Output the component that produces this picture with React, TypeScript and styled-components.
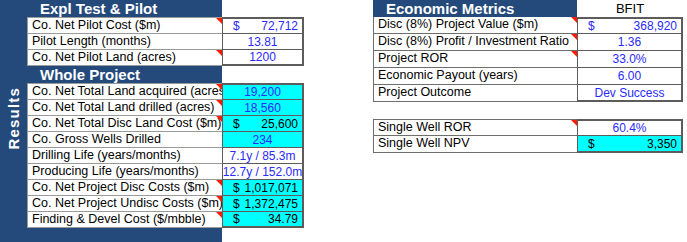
import React from 'react';
import styled, { createGlobalStyle } from 'styled-components';

type Tone = 'blue' | 'black';

interface MetricRow {
  label: string;
  note?: boolean;
  value: string;
  dollar?: boolean;
  fill?: boolean;
  tone?: Tone;
}

const BLUE = '#244a7c';
const CYAN = '#00ffff';
const INK_BLUE = '#2a2aff';
const EDGE = '#5c5c5c';

const pilotRows: MetricRow[] = [
  { label: 'Co. Net Pilot Cost ($m)', note: true, value: '72,712', dollar: true },
  { label: 'Pilot Length (months)', value: '13.81' },
  { label: 'Co. Net Pilot Land (acres)', note: true, value: '1200' },
];

const projectRows: MetricRow[] = [
  { label: 'Co. Net Total Land acquired (acres)', note: true, value: '19,200', fill: true },
  { label: 'Co. Net Total Land drilled (acres)', note: true, value: '18,560', fill: true },
  { label: 'Co. Net Total Disc Land Cost ($m)', note: true, value: '25,600', dollar: true, fill: true, tone: 'black' },
  { label: 'Co. Gross Wells Drilled', value: '234', fill: true },
  { label: 'Drilling Life (years/months)', value: '7.1y / 85.3m' },
  { label: 'Producing Life (years/months)', value: '12.7y / 152.0m' },
  { label: 'Co. Net Project Disc Costs ($m)', note: true, value: '1,017,071', dollar: true, fill: true, tone: 'black' },
  { label: 'Co. Net Project Undisc Costs ($m)', note: true, value: '1,372,475', dollar: true, fill: true, tone: 'black' },
  { label: 'Finding & Devel Cost ($/mbble)', note: true, value: '34.79', dollar: true, fill: true, tone: 'black' },
];

const economicRows: MetricRow[] = [
  { label: 'Disc (8%) Project Value ($m)', note: true, value: '368,920', dollar: true },
  { label: 'Disc (8%) Profit / Investment Ratio', note: true, value: '1.36' },
  { label: 'Project ROR', note: true, value: '33.0%' },
  { label: 'Economic Payout (years)', value: '6.00' },
  { label: 'Project Outcome', value: 'Dev Success' },
];

const wellRows: MetricRow[] = [
  { label: 'Single Well ROR', note: true, value: '60.4%' },
  { label: 'Single Well NPV', value: '3,350', dollar: true, fill: true, tone: 'black' },
];

const GlobalStyle = createGlobalStyle`
  body {
    margin: 0;
    background: #ffffff;
    font-family: 'Liberation Sans', Arial, sans-serif;
  }
`;

const Page = styled.div`
  display: flex;
  gap: 69px;
  width: 687px;
  height: 242px;
  overflow: hidden;
`;

const LeftBlock = styled.div`
  display: flex;
  height: 242px;
`;

const SideBar = styled.div`
  width: 27px;
  background: ${BLUE};
  display: flex;
  align-items: center;
  justify-content: center;
  padding-bottom: 6px;
  box-sizing: border-box;
`;

const SideTitle = styled.span`
  writing-mode: vertical-rl;
  transform: rotate(180deg);
  color: #ffffff;
  font-weight: 700;
  font-size: 15px;
  letter-spacing: 1.2px;
`;

const Column = styled.div`
  display: flex;
  flex-direction: column;
`;

const Row = styled.div<{ $label: number; $value: number }>`
  display: grid;
  grid-template-columns: ${(p) => p.$label}px ${(p) => p.$value}px;
  height: 17px;
`;

const HeaderCell = styled.div`
  background: ${BLUE};
  color: #ffffff;
  font-weight: 700;
  font-size: 15px;
  line-height: 17px;
  padding-left: 13px;
  white-space: nowrap;
`;

const LeftFiller = styled.div`
  background: ${BLUE};
`;

const ColumnTitle = styled.div`
  font-size: 13px;
  line-height: 18px;
  text-align: center;
  color: #000000;
`;

const LabelCell = styled.div<{ $note?: boolean; $first?: boolean; $edge: string }>`
  position: relative;
  box-sizing: border-box;
  background: #ffffff;
  border-left: 1px solid ${(p) => p.$edge};
  border-bottom: 1px solid ${(p) => p.$edge};
  border-top: ${(p) => (p.$first ? `1px solid ${p.$edge}` : 'none')};
  font-size: 12.5px;
  line-height: 15px;
  padding-left: 4px;
  color: #000000;
  white-space: nowrap;
  overflow: hidden;

  &::after {
    content: '';
    display: ${(p) => (p.$note ? 'block' : 'none')};
    position: absolute;
    top: 0;
    right: 0;
    border-left: 6px solid transparent;
    border-top: 6px solid #ff1a00;
  }
`;

const ValueCell = styled.div<{ $fill?: boolean; $tone: Tone; $first?: boolean; $last?: boolean; $split?: boolean }>`
  box-sizing: border-box;
  display: flex;
  align-items: center;
  justify-content: ${(p) => (p.$split ? 'space-between' : 'center')};
  padding: ${(p) => (p.$split ? '0 4px 0 10px' : '0')};
  background: ${(p) => (p.$fill ? CYAN : '#ffffff')};
  color: ${(p) => (p.$tone === 'black' ? '#000000' : INK_BLUE)};
  border-left: 1px solid ${EDGE};
  border-right: 2px solid ${EDGE};
  border-top: ${(p) => (p.$first ? `2px solid ${EDGE}` : 'none')};
  border-bottom: ${(p) => (p.$last ? 2 : 1)}px solid ${EDGE};
  font-size: 12px;
  white-space: nowrap;
`;

const Dollar = styled.span<{ $tone: Tone }>`
  color: ${(p) => (p.$tone === 'black' ? '#000000' : INK_BLUE)};
`;

const Spacer = styled.div`
  height: 17px;
`;

const RightBlock = styled.div`
  display: flex;
  flex-direction: column;
`;

function MetricGroup({
  rows,
  label,
  value,
  edge,
  lead,
}: {
  rows: MetricRow[];
  label: number;
  value: number;
  edge: string;
  lead?: boolean;
}) {
  return (
    <>
      {rows.map((r, i) => {
        const tone: Tone = r.tone ?? 'blue';
        return (
          <Row key={r.label} $label={label} $value={value}>
            <LabelCell $note={r.note} $first={lead && i === 0} $edge={edge}>
              {r.label}
            </LabelCell>
            <ValueCell
              $fill={r.fill}
              $tone={tone}
              $first={i === 0}
              $last={i === rows.length - 1}
              $split={r.dollar}
            >
              {r.dollar && <Dollar $tone={r.fill ? tone : 'blue'}>$</Dollar>}
              <span>{r.value}</span>
            </ValueCell>
          </Row>
        );
      })}
    </>
  );
}

export default function App() {
  return (
    <>
      <GlobalStyle />
      <Page>
        <LeftBlock>
          <SideBar>
            <SideTitle>Results</SideTitle>
          </SideBar>
          <Column>
            <Row $label={195} $value={82}>
              <HeaderCell>Expl Test &amp; Pilot</HeaderCell>
              <div />
            </Row>
            <MetricGroup rows={pilotRows} label={195} value={82} edge="#9a9a9a" lead />
            <Row $label={195} $value={82}>
              <HeaderCell>Whole Project</HeaderCell>
              <div />
            </Row>
            <MetricGroup rows={projectRows} label={195} value={82} edge="#9a9a9a" lead />
            <Row $label={195} $value={82}>
              <LeftFiller />
              <div />
            </Row>
          </Column>
        </LeftBlock>
        <RightBlock>
          <Row $label={204} $value={106}>
            <HeaderCell>Economic Metrics</HeaderCell>
            <ColumnTitle>BFIT</ColumnTitle>
          </Row>
          <MetricGroup rows={economicRows} label={204} value={106} edge="#6e6e6e" />
          <Spacer />
          <MetricGroup rows={wellRows} label={204} value={106} edge="#6e6e6e" lead />
        </RightBlock>
      </Page>
    </>
  );
}
